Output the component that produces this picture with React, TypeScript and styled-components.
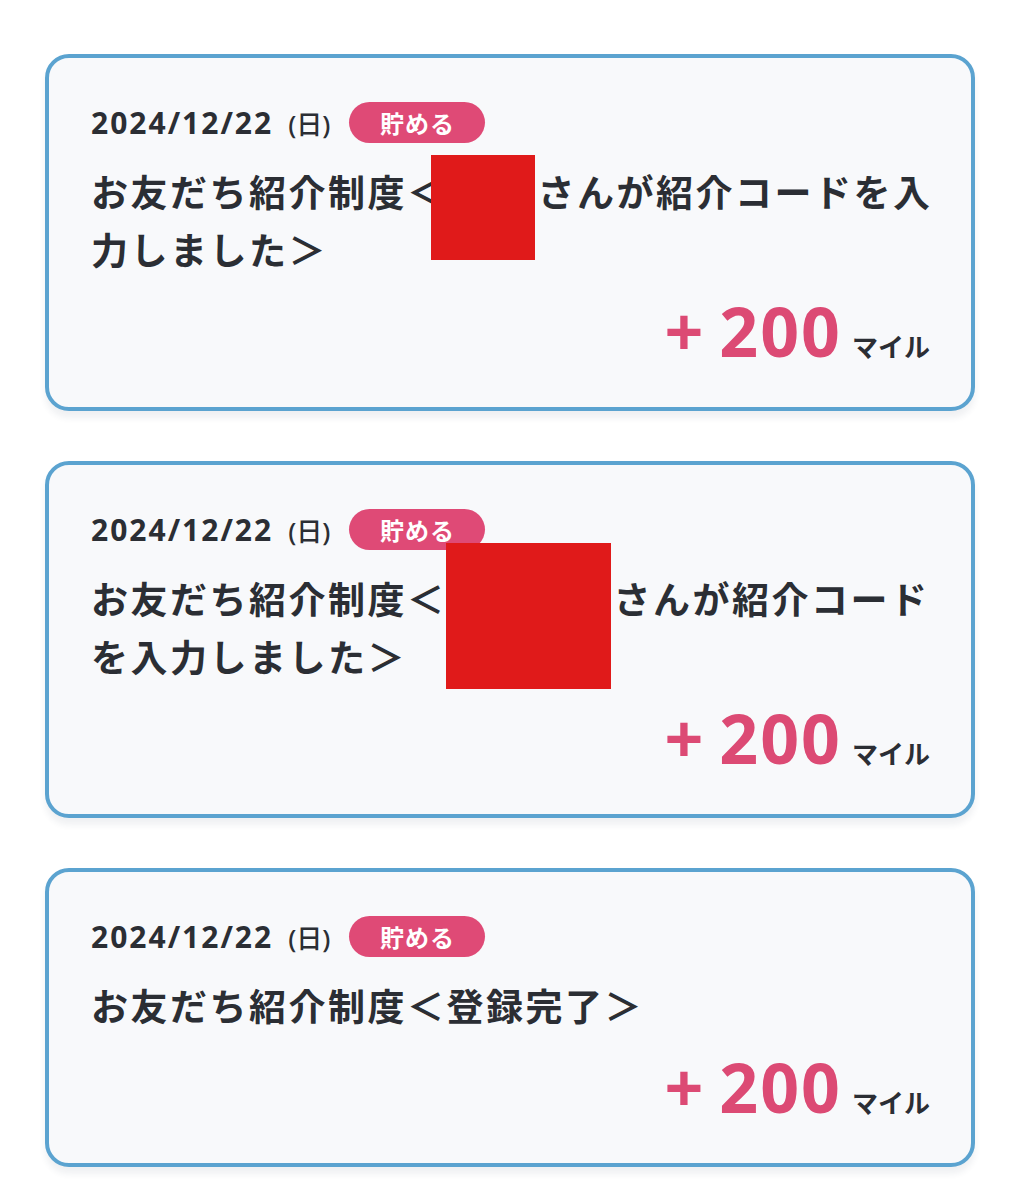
import React from 'react'
import styled, { createGlobalStyle } from 'styled-components'

const GlobalStyle = createGlobalStyle`
  html, body {
    margin: 0;
    padding: 0;
    background: #ffffff;
  }
  body {
    font-family: "Noto Sans", "Noto Sans CJK JP", sans-serif;
    color: #2b2e34;
  }
`

const Page = styled.div`
  display: flex;
  flex-direction: column;
  gap: 50px;
  padding: 54px 46px 40px 45px;
`

const Card = styled.div`
  background: #f8f9fb;
  border: 4px solid #5ba3d0;
  border-radius: 24px;
  box-shadow: 0 7px 6px rgba(40, 60, 90, 0.07);
  padding: 44px 20px 42px 42px;
`

const Header = styled.div`
  display: flex;
  align-items: center;
  height: 41px;
`

const DateText = styled.span`
  font-family: "Noto Sans", "Noto Sans CJK JP", sans-serif;
  font-size: 30px;
  font-weight: 700;
  letter-spacing: 2px;
  color: #2b2e34;
`

const DayText = styled.span`
  font-family: "Noto Sans", "Noto Sans CJK JP", sans-serif;
  font-size: 26px;
  font-weight: 500;
  margin-left: 15px;
  color: #2b2e34;
`

const Badge = styled.span`
  display: inline-flex;
  align-items: center;
  justify-content: center;
  height: 41px;
  width: 136px;
  margin-left: 19px;
  border-radius: 21px;
  background: #df4a76;
  color: #ffffff;
  font-family: "Noto Sans CJK JP", sans-serif;
  font-size: 24px;
  font-weight: 700;
  letter-spacing: 1px;
`

const Title = styled.div`
  margin-top: 19px;
  font-family: "Noto Sans CJK JP", sans-serif;
  font-size: 37px;
  font-weight: 700;
  line-height: 58px;
  letter-spacing: 2.5px;
  color: #2b2e34;
`

interface MaskProps {
  $w: number
  $up: number
  $down: number
  $shift: number
}

// redaction block that sits in the text flow without changing line height
const Mask = styled.span<MaskProps>`
  display: inline-block;
  background: #e01a1a;
  width: ${p => p.$w}px;
  height: ${p => p.$up + p.$down}px;
  margin-top: -${p => p.$up}px;
  margin-bottom: -${p => p.$down}px;
  margin-left: ${p => p.$shift}px;
  margin-right: 3px;
  vertical-align: baseline;
`

const AmountRow = styled.div`
  display: flex;
  justify-content: flex-end;
  align-items: baseline;
  margin-top: 19px;
  margin-right: 21px;
  line-height: 1;
`

const Amount = styled.span`
  font-family: "Noto Sans", sans-serif;
  font-size: 68px;
  font-weight: 700;
  color: #dc4a74;
  letter-spacing: 2px;
`

const Plus = styled.span`
  letter-spacing: 0;
  margin-right: 16px;
`

const Unit = styled.span`
  font-family: "Noto Sans CJK JP", sans-serif;
  font-size: 26px;
  font-weight: 700;
  margin-left: 10px;
  color: #2b2e34;
`

interface Entry {
  before: string
  after: string
  mask?: { w: number; up: number; down: number; shift: number }
}

const entries: Entry[] = [
  {
    before: 'お友だち紹介制度＜',
    after: 'さんが紹介コードを入力しました＞',
    mask: { w: 104, up: 52, down: 53, shift: -16 },
  },
  {
    before: 'お友だち紹介制度＜',
    after: 'さんが紹介コードを入力しました＞',
    mask: { w: 165, up: 71, down: 75, shift: -1 },
  },
  {
    before: 'お友だち紹介制度＜登録完了＞',
    after: '',
  },
]

const App: React.FC = () => {
  return (
    <>
      <GlobalStyle />
      <Page>
        {entries.map((e, i) => (
          <Card key={i}>
            <Header>
              <DateText>2024/12/22</DateText>
              <DayText>(日)</DayText>
              <Badge>貯める</Badge>
            </Header>
            <Title>
              {e.before}
              {e.mask && <Mask $w={e.mask.w} $up={e.mask.up} $down={e.mask.down} $shift={e.mask.shift} />}
              {e.after}
            </Title>
            <AmountRow>
              <Amount>
                <Plus>+</Plus>200
              </Amount>
              <Unit>マイル</Unit>
            </AmountRow>
          </Card>
        ))}
      </Page>
    </>
  )
}

export default App
